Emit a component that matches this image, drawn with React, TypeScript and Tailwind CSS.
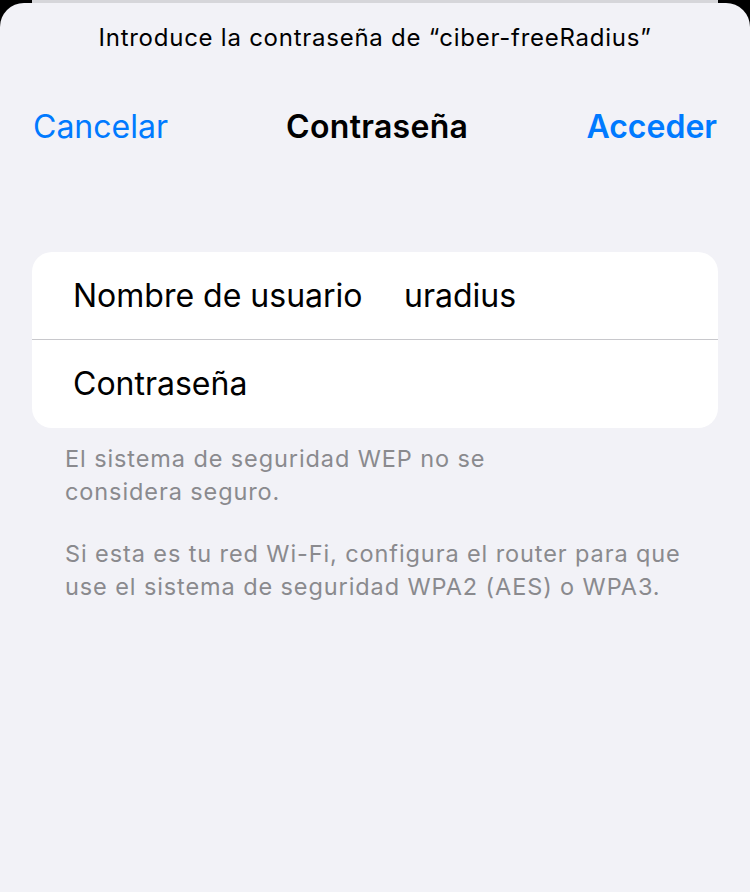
import React from "react";

export default function App() {
  const font = { fontFamily: "Inter, 'Liberation Sans', sans-serif" };
  return (
    <div className="w-[750px] h-[892px] bg-black flex flex-col overflow-hidden" style={font}>
      <div className="h-[3px] mx-[32px] bg-[#d6d6da] shrink-0" />
      <div className="flex-1 bg-[#f2f2f7] rounded-t-[24px] flex flex-col">
        <div className="h-[70px] flex items-center justify-center pb-[1px]">
          <span className="text-[24px] tracking-[0.75px] text-black">
            Introduce la contraseña de “ciber-freeRadius”
          </span>
        </div>
        <div className="h-[108px] flex items-center justify-between px-[33px]">
          <span className="text-[32px] text-[#007aff]">Cancelar</span>
          <span className="text-[32px] font-semibold tracking-[0.3px] text-black">Contraseña</span>
          <span className="text-[32px] font-semibold text-[#007aff]">Acceder</span>
        </div>
        <div className="h-[71px]" />
        <div className="mx-[32px] bg-white rounded-[20px] flex flex-col">
          <div className="h-[88px] flex items-center pl-[41px] border-b border-[#c8c8cc]">
            <span className="w-[331px] text-[32px] text-black">Nombre de usuario</span>
            <span className="text-[32px] text-black">uradius</span>
          </div>
          <div className="h-[88px] flex items-center pl-[41px]">
            <span className="text-[32px] text-black">Contraseña</span>
          </div>
        </div>
        <div className="px-[65px] pt-[15px] text-[23.5px] tracking-[0.9px] leading-[32.5px] text-[#8a8a8e]">
          <p>El sistema de seguridad WEP no se<br />considera seguro.</p>
          <p className="mt-[30px]">
            Si esta es tu red Wi-Fi, configura el router para que<br />use el sistema de seguridad WPA2 (AES) o WPA3.
          </p>
        </div>
      </div>
    </div>
  );
}
